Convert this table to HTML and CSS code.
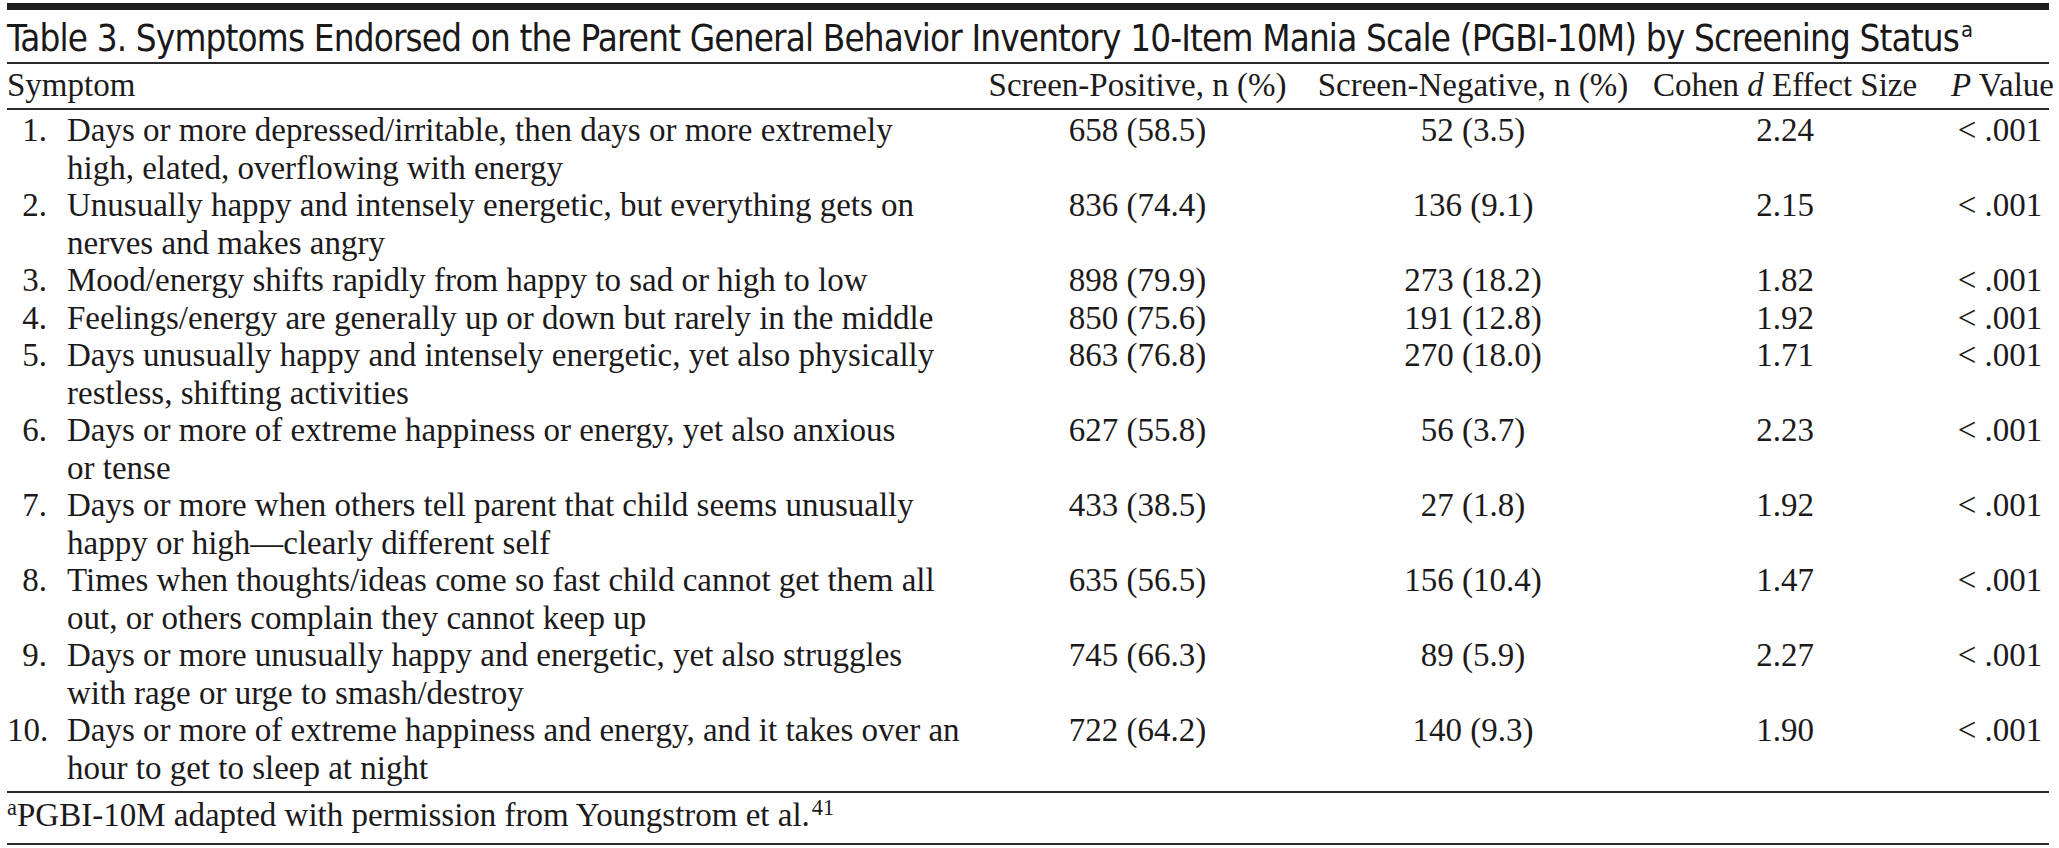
FILE: index.html
```html
<!DOCTYPE html>
<html lang="en">
<head>
<meta charset="utf-8">
<title>Table 3. PGBI-10M Symptoms by Screening Status</title>
<link rel="stylesheet" href="styles.css">
</head>
<body>
<div class="page">
  <div class="topbar"></div>
  <h1 class="title">Table 3. Symptoms Endorsed on the Parent General Behavior Inventory 10-Item Mania Scale (PGBI-10M) by Screening Status<sup class="tsup">a</sup></h1>
  <table class="data">
    <colgroup>
      <col class="c-sym">
      <col class="c-pos">
      <col class="c-neg">
      <col class="c-d">
      <col class="c-p">
    </colgroup>
    <thead>
      <tr>
        <th class="sym">Symptom</th>
        <th class="num">Screen-Positive, n (%)</th>
        <th class="num">Screen-Negative, n (%)</th>
        <th class="num">Cohen <i>d</i> Effect Size</th>
        <th class="num pval"><i>P</i> Value</th>
      </tr>
    </thead>
    <tbody>
      <tr>
        <td class="sym"><div class="item"><span class="no">1.</span><span class="txt">Days or more depressed/irritable, then days or more extremely<br>high, elated, overflowing with energy</span></div></td>
        <td class="num">658 (58.5)</td><td class="num">52 (3.5)</td><td class="num">2.24</td><td class="num pval">&lt; .001</td>
      </tr>
      <tr>
        <td class="sym"><div class="item"><span class="no">2.</span><span class="txt">Unusually happy and intensely energetic, but everything gets on<br>nerves and makes angry</span></div></td>
        <td class="num">836 (74.4)</td><td class="num">136 (9.1)</td><td class="num">2.15</td><td class="num pval">&lt; .001</td>
      </tr>
      <tr>
        <td class="sym"><div class="item"><span class="no">3.</span><span class="txt">Mood/energy shifts rapidly from happy to sad or high to low</span></div></td>
        <td class="num">898 (79.9)</td><td class="num">273 (18.2)</td><td class="num">1.82</td><td class="num pval">&lt; .001</td>
      </tr>
      <tr>
        <td class="sym"><div class="item"><span class="no">4.</span><span class="txt">Feelings/energy are generally up or down but rarely in the middle</span></div></td>
        <td class="num">850 (75.6)</td><td class="num">191 (12.8)</td><td class="num">1.92</td><td class="num pval">&lt; .001</td>
      </tr>
      <tr>
        <td class="sym"><div class="item"><span class="no">5.</span><span class="txt">Days unusually happy and intensely energetic, yet also physically<br>restless, shifting activities</span></div></td>
        <td class="num">863 (76.8)</td><td class="num">270 (18.0)</td><td class="num">1.71</td><td class="num pval">&lt; .001</td>
      </tr>
      <tr>
        <td class="sym"><div class="item"><span class="no">6.</span><span class="txt">Days or more of extreme happiness or energy, yet also anxious<br>or tense</span></div></td>
        <td class="num">627 (55.8)</td><td class="num">56 (3.7)</td><td class="num">2.23</td><td class="num pval">&lt; .001</td>
      </tr>
      <tr>
        <td class="sym"><div class="item"><span class="no">7.</span><span class="txt">Days or more when others tell parent that child seems unusually<br>happy or high—clearly different self</span></div></td>
        <td class="num">433 (38.5)</td><td class="num">27 (1.8)</td><td class="num">1.92</td><td class="num pval">&lt; .001</td>
      </tr>
      <tr>
        <td class="sym"><div class="item"><span class="no">8.</span><span class="txt">Times when thoughts/ideas come so fast child cannot get them all<br>out, or others complain they cannot keep up</span></div></td>
        <td class="num">635 (56.5)</td><td class="num">156 (10.4)</td><td class="num">1.47</td><td class="num pval">&lt; .001</td>
      </tr>
      <tr>
        <td class="sym"><div class="item"><span class="no">9.</span><span class="txt">Days or more unusually happy and energetic, yet also struggles<br>with rage or urge to smash/destroy</span></div></td>
        <td class="num">745 (66.3)</td><td class="num">89 (5.9)</td><td class="num">2.27</td><td class="num pval">&lt; .001</td>
      </tr>
      <tr>
        <td class="sym"><div class="item"><span class="no">10.</span><span class="txt">Days or more of extreme happiness and energy, and it takes over an<br>hour to get to sleep at night</span></div></td>
        <td class="num">722 (64.2)</td><td class="num">140 (9.3)</td><td class="num">1.90</td><td class="num pval">&lt; .001</td>
      </tr>
    </tbody>
  </table>
  <p class="footnote"><sup class="fsup">a</sup>PGBI-10M adapted with permission from Youngstrom et al.<sup class="rsup">41</sup></p>
</div>
</body>
</html>
```

FILE: styles.css
```css
html, body {
  margin: 0;
  padding: 0;
  background: #ffffff;
}

.page {
  width: 2042px;
  margin-left: 7px;
  padding-top: 3px;
  color: #1c1a1b;
  font-family: "Liberation Serif", "Times New Roman", serif;
  font-size: 33px;
}

.topbar {
  height: 7px;
  background: #1e1e1e;
}

.title {
  margin: 0;
  padding-top: 5px;
  height: 47px;
  line-height: 47px;
  font-family: "DejaVu Sans Condensed", "Liberation Sans Narrow", sans-serif;
  font-stretch: condensed;
  font-weight: normal;
  font-size: 36.5px;
  letter-spacing: -0.85px;
  white-space: nowrap;
  color: #1a1819;
  border-bottom: 2px solid #2a2a2a;
}

.tsup {
  font-size: 0.6em;
  line-height: 0;
  vertical-align: 0.62em;
  margin-left: 2px;
  letter-spacing: 0;
}

.data {
  width: 2042px;
  table-layout: fixed;
  border-collapse: collapse;
  border-spacing: 0;
}

.c-sym { width: 965px; }
.c-pos { width: 331px; }
.c-neg { width: 340px; }
.c-d   { width: 284px; }
.c-p   { width: 122px; }

.data th,
.data td {
  padding: 0;
  font-weight: normal;
  line-height: 37.5px;
  vertical-align: top;
  white-space: nowrap;
}

.data thead th {
  padding-top: 3px;
  padding-bottom: 3.5px;
  border-bottom: 2px solid #2a2a2a;
}

.data th.sym,
.data td.sym {
  text-align: left;
}

.data .num {
  text-align: center;
}

.data .pval {
  padding-left: 24px;
}

.data tbody tr:first-child td {
  padding-top: 2.3px;
}

.data tbody tr:last-child td {
  padding-bottom: 3.5px;
  border-bottom: 2px solid #2a2a2a;
}

.item {
  display: flex;
}

.no {
  width: 40px;
  flex: 0 0 40px;
  text-align: right;
}

.txt {
  margin-left: 20px;
}

.footnote {
  margin: 0;
  padding-top: 4px;
  padding-bottom: 8.3px;
  line-height: 37.5px;
  border-bottom: 2px solid #2a2a2a;
}

.fsup,
.rsup {
  font-size: 0.68em;
  line-height: 0;
  vertical-align: 0.5em;
}

.rsup {
  margin-left: 2px;
}
```
